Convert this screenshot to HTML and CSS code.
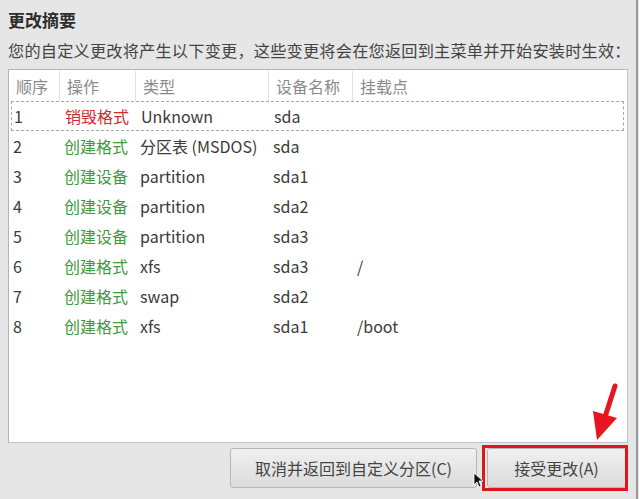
FILE: index.html
```html
<!DOCTYPE html>
<html lang="zh">
<head>
<meta charset="utf-8">
<link rel="stylesheet" href="styles.css">
</head>
<body>
<div class="window">
  <h1 class="title">更改摘要</h1>
  <p class="desc">您的自定义更改将产生以下变更，这些变更将会在您返回到主菜单并开始安装时生效：</p>
  <div class="table">
    <div class="row head">
      <div class="c c1">顺序</div>
      <div class="c c2">操作</div>
      <div class="c c3">类型</div>
      <div class="c c4">设备名称</div>
      <div class="c c5">挂载点</div>
    </div>
    <div class="row focus">
      <div class="c c1">1</div><div class="c c2 red">销毁格式</div><div class="c c3">Unknown</div><div class="c c4">sda</div><div class="c c5"></div>
    </div>
    <div class="row">
      <div class="c c1">2</div><div class="c c2 green">创建格式</div><div class="c c3">分区表 (MSDOS)</div><div class="c c4">sda</div><div class="c c5"></div>
    </div>
    <div class="row">
      <div class="c c1">3</div><div class="c c2 green">创建设备</div><div class="c c3">partition</div><div class="c c4">sda1</div><div class="c c5"></div>
    </div>
    <div class="row">
      <div class="c c1">4</div><div class="c c2 green">创建设备</div><div class="c c3">partition</div><div class="c c4">sda2</div><div class="c c5"></div>
    </div>
    <div class="row">
      <div class="c c1">5</div><div class="c c2 green">创建设备</div><div class="c c3">partition</div><div class="c c4">sda3</div><div class="c c5"></div>
    </div>
    <div class="row">
      <div class="c c1">6</div><div class="c c2 green">创建格式</div><div class="c c3">xfs</div><div class="c c4">sda3</div><div class="c c5">/</div>
    </div>
    <div class="row">
      <div class="c c1">7</div><div class="c c2 green">创建格式</div><div class="c c3">swap</div><div class="c c4">sda2</div><div class="c c5"></div>
    </div>
    <div class="row">
      <div class="c c1">8</div><div class="c c2 green">创建格式</div><div class="c c3">xfs</div><div class="c c4">sda1</div><div class="c c5">/boot</div>
    </div>
  </div>
  <div class="buttons">
    <button class="btn cancel">取消并返回到自定义分区(C)</button>
    <button class="btn accept">接受更改(A)<span class="highlight"></span></button>
  </div>
  <svg class="arrow" width="40" height="70" viewBox="0 0 40 70">
    <line x1="28" y1="4" x2="17" y2="38" stroke="#e8141f" stroke-width="5" stroke-linecap="round"/>
    <polygon points="6,29 30,36 10,58" fill="#e8141f"/>
  </svg>
  <svg class="cursor" width="12" height="16" viewBox="0 0 12 16">
    <polygon points="1,1 1,13 4,10 6,15 8,14 6,9 10,9" fill="#111" stroke="#fff" stroke-width="0.8"/>
  </svg>
</div>
</body>
</html>
```
FILE: styles.css
```css
html, body {
  margin: 0;
  padding: 0;
  background: #e6e6e6;
}
.window {
  position: relative;
  width: 638px;
  height: 499px;
  box-sizing: border-box;
  border-right: 2px solid #9a9a9a;
  padding: 8px 0 0 8px;
  font-family: "Noto Sans CJK SC", "Noto Sans", sans-serif;
  font-size: 16px;
  color: #3a3a3a;
}
.title {
  margin: 0;
  font-size: 17px;
  line-height: 24px;
  font-weight: bold;
  color: #2e2e2e;
}
.desc {
  margin: 6px 0 0 0;
  font-size: 16.2px;
  letter-spacing: 0.2px;
  line-height: 24px;
  color: #444;
}
.table {
  margin-top: 7px;
  width: 620px;
  height: 374px;
  box-sizing: border-box;
  background: #fff;
  border: 1px solid #b4b4b4;
  border-right-color: #c8c8c8;
  border-bottom-color: #c4c4c4;
  padding: 0 3px 0 0;
}
.row {
  display: grid;
  grid-template-columns: 50px 76px 133px 84px 1fr;
  height: 30px;
  align-items: center;
  line-height: 24px;
  box-sizing: border-box;
}
.head {
  color: #8a8a8a;
  height: 31px;
}
.head .c {
  padding-left: 7px;
  height: 30px;
  line-height: 30px;
  border-left: 1px solid #e2e2e2;
}
.head .c1 {
  border-left: none;
}
.c {
  padding-left: 5px;
  white-space: nowrap;
}
.row .c1 { padding-left: 4px; }
.head .c1 { padding-left: 7px; }
.focus {
  margin-left: 2px;
  border: 1px dashed #a8a8a8;
  grid-template-columns: 48px 76px 133px 84px 1fr;
}
.focus .c1 { padding-left: 2px; }
.red { color: #d32a2a; }
.green { color: #3f9a3f; }
.buttons {
  width: 618px;
  display: flex;
  justify-content: flex-end;
  gap: 10px;
  margin-top: 5px;
}
.btn {
  position: relative;
  height: 40px;
  box-sizing: border-box;
  border: 1px solid #b6b6b6;
  border-radius: 3px;
  background: linear-gradient(#f0f0f0, #dcdcdc);
  font-family: "Noto Sans CJK SC", "Noto Sans", sans-serif;
  font-size: 16px;
  color: #444;
  padding: 0;
}
.cancel { width: 247px; }
.accept { width: 139px; }
.highlight {
  position: absolute;
  left: -6px;
  right: -3px;
  top: -4px;
  bottom: -4px;
  border: 3px solid #e0141e;
}
.arrow {
  position: absolute;
  left: 587px;
  top: 382px;
}
.cursor {
  position: absolute;
  left: 473px;
  top: 472px;
}
```
